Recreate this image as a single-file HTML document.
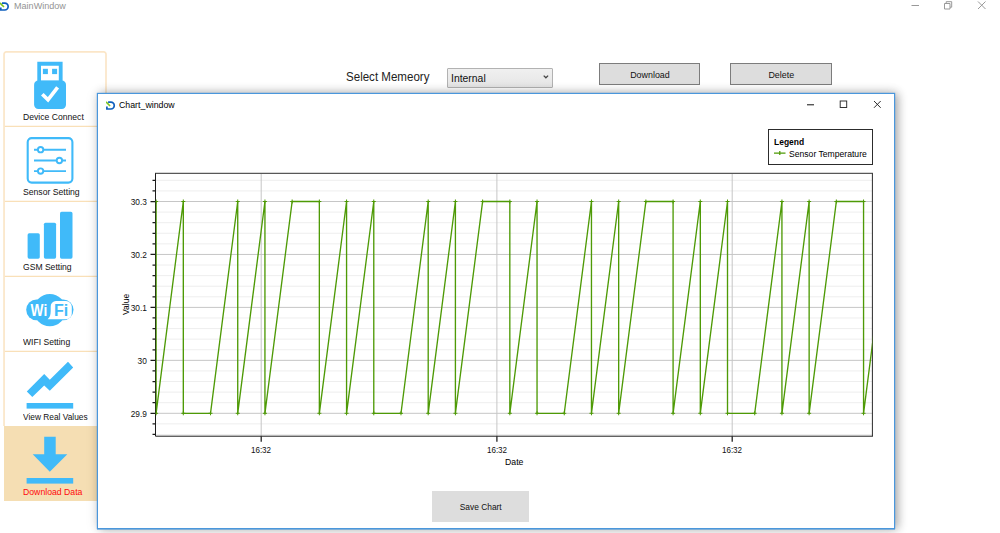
<!DOCTYPE html>
<html><head><meta charset="utf-8"><title>MainWindow</title>
<style>
*{box-sizing:border-box;margin:0;padding:0}
html,body{width:1000px;height:533px;overflow:hidden;background:#fff;font-family:"Liberation Sans",sans-serif;color:#000}
.abs{position:absolute}
.t{position:absolute;white-space:nowrap;line-height:1;transform-origin:0 0}
/* main title */
#mt{left:13.6px;top:1px;font-size:9.9px;color:#939393;transform:scaleX(.917)}
/* sidebar */
#sb{left:4px;top:51px;width:103px;height:451px;border:1px solid #fbe6c8;border-radius:3px 0 0 0;border-bottom:none}
.sep{position:absolute;left:4px;width:103px;height:1px;background:#fbe6c8}
#sel{left:3.6px;top:425.8px;width:94px;height:75.6px;background:#f5deb3}
.lb{position:absolute;left:22.7px;font-size:9.9px;white-space:nowrap;line-height:1;color:#111;transform-origin:0 0}
/* controls */
#lbl{left:345.8px;top:71px;font-size:12.5px;color:#222;transform:scaleX(.924)}
#combo{left:447px;top:68px;width:106px;height:20px;border:1px solid #b2b2b2;background:linear-gradient(#f0f0f0,#e5e5e5);border-radius:1px}
.btn{position:absolute;top:63px;height:22px;border:1px solid #7c7c7c;background:#dddddd;font-size:9.9px;text-align:center;line-height:21px;color:#111}
.btn span{display:inline-block;transform:scaleX(.9)}
#save span{display:inline-block;transform:scaleX(.85)}
/* chart window */
#cw{left:97px;top:93px;width:798px;height:436px;background:#fff;border:1px solid #4a97dc;box-shadow:0 .5px 0 #4a97dc, 0 0 1px #2f8be0, 3px 0px 9px rgba(0,0,0,.30), 0 0 13px rgba(0,0,0,.09)}
#ct{left:119px;top:100px;font-size:9.9px;color:#000;transform:scaleX(.89)}
#lg{left:768px;top:129px;width:105px;height:36px;border:1px solid #2c2c2c;background:#fff}
.yl{position:absolute;right:852.8px;font-size:9.7px;line-height:14px;height:14px;white-space:nowrap;color:#111;transform:scaleX(.858);transform-origin:100% 0}
.xl{position:absolute;top:444.2px;width:40px;text-align:center;font-size:9.7px;line-height:12px;color:#111;transform:scaleX(.83)}
#save{left:432px;top:491px;width:97px;height:31px;background:#dddddd;font-size:9.9px;text-align:center;line-height:32px;color:#111}
</style></head>
<body>
<!-- main window title -->
<svg class="abs" style="left:0;top:1.75px;overflow:hidden" width="12" height="12" viewBox="0.1 0 12 12"><path d="M2.1 1.2H4.85A3.4 3.4 0 0 1 4.85 8H0.9V5.5" fill="none" stroke="#0f5fbd" stroke-width="1.7"/><path d="M0.45 1.35L3.6 4.5" fill="none" stroke="#7cc520" stroke-width="1.7" stroke-linecap="round"/></svg>
<div class="t" id="mt">MainWindow</div>
<svg class="abs" style="left:905px;top:0" width="95" height="14" viewBox="0 0 95 14" fill="none" stroke="#999" stroke-width="1">
<path d="M6.5 5.5h7.5"/>
<path d="M39.5 3.5h5.5v5.5h-5.5zM41.2 3.5v-1.8h5.5v5.5h-1.7"/>
<path d="M73 1.5l7.5 7.5M80.5 1.5l-7.5 7.5"/>
</svg>

<!-- sidebar -->
<div class="abs" id="sel"></div>
<svg class="abs" style="left:0;top:48px" width="112" height="458" viewBox="0 48 112 458" fill="none">
<path d="M4.05 426V54.2a2.2 2.2 0 0 1 2.2-2.25H103.8a2.2 2.2 0 0 1 2.2 2.25V94" stroke="#fbe6c8" stroke-width="1.7"/>
<path d="M4.8 126.4H97M4.8 201.4H97M4.8 276.4H97M4.8 351.4H97" stroke="#f9e0b8" stroke-width="1.3"/>
</svg>
<svg class="abs" style="left:0;top:51px" width="110" height="452" viewBox="0 51 110 452">
<g fill="#40baf9">
<!-- usb -->
<path d="M37.3 61.8h25.3v19.5h-25.3z M41 65.8v15h17.8v-15z" fill-rule="evenodd"/>
<rect x="42.9" y="68.8" width="5" height="5.3"/><rect x="52.1" y="68.8" width="5" height="5.3"/>
<rect x="34.1" y="80.6" width="31.9" height="28.3" rx="4.2"/>
<path d="M42.3 94.2l5.7 5.6 9.6-12.4" fill="none" stroke="#fff" stroke-width="3.7"/>
<!-- sensor -->
<rect x="27.7" y="138.1" width="44.7" height="44.5" rx="4" fill="none" stroke="#40baf9" stroke-width="2.1"/>
<g fill="none" stroke="#40baf9" stroke-width="1.9">
<path d="M34 149.7h3.9M43.3 149.7H66M34 160.5h22.7M62.1 160.5H66M34 171.1h3.9M43.3 171.1H66"/>
<circle cx="40.6" cy="149.7" r="2.7"/><circle cx="59.4" cy="160.5" r="2.7"/><circle cx="40.6" cy="171.1" r="2.7"/>
</g>
<!-- gsm -->
<rect x="27.6" y="233.3" width="12.2" height="25.4" rx="1.6"/>
<rect x="43.9" y="222.7" width="12.2" height="36" rx="1.6"/>
<rect x="60" y="211.8" width="12.5" height="46.9" rx="1.6"/>
<!-- wifi -->
<rect x="26.2" y="299.4" width="47.3" height="20.8" rx="10.4"/>
<circle cx="49.8" cy="310.2" r="16.1"/>
<!-- realvalues -->
<path d="M26.8 391.4L32.3 397 44.2 385.5 49.8 390.7 73.2 367.5 68 361.8 49.8 379.7 44.2 374.1z"/>
<rect x="26.6" y="403" width="46.6" height="5.6"/>
<!-- download -->
<path d="M44.2 436.8h11.5v17.5h11.6L49.8 471.8 32.7 454.3h11.5z"/>
<rect x="26.6" y="478" width="46.6" height="5.6"/>
</g>
<!-- wifi text -->
<path d="M56 301h10a5.8 5.8 0 0 1 5.8 5.8v6.6a5.8 5.8 0 0 1-5.8 5.8H47.6c2.6-2 3-4.5 3.1-8.2v-4.2a5.4 5.4 0 0 1 5.3-5.8z" fill="#fff"/>
<g font-family="Liberation Sans" font-weight="bold" font-size="15.6">
<text x="30.6" y="315.5" fill="#fff" textLength="16.6" lengthAdjust="spacingAndGlyphs">Wi</text>
<text x="54" y="315.5" fill="#40baf9" textLength="14.2" lengthAdjust="spacingAndGlyphs">Fi</text>
</g>
</svg>
<div class="lb" id="l1" style="top:112.0px;transform:scaleX(0.8720)">Device Connect</div>
<div class="lb" id="l2" style="top:187.0px;transform:scaleX(0.8750)">Sensor Setting</div>
<div class="lb" id="l3" style="top:262.0px;transform:scaleX(0.8680)">GSM Setting</div>
<div class="lb" id="l4" style="top:337.0px;transform:scaleX(0.8680)">WIFI Setting</div>
<div class="lb" id="l5" style="top:412.0px;transform:scaleX(0.8450)">View Real Values</div>
<div class="lb" id="l6" style="top:487.0px;transform:scaleX(0.8800);color:#ff0a0a">Download Data</div>

<!-- controls -->
<div class="t" id="lbl">Select Memeory</div>
<div class="abs" id="combo"><div class="t" id="cbt" style="left:3px;top:5px;font-size:10px;color:#111;transform:scaleX(1.04)">Internal</div>
<svg class="abs" style="left:95.4px;top:6.4px" width="6" height="4" viewBox="0 0 6 4"><path d="M0.7 0.6L2.9 2.8L5.1 0.6" fill="none" stroke="#444" stroke-width="1.3"/></svg></div>
<div class="btn" id="b1" style="left:599px;width:101px"><span>Download</span></div>
<div class="btn" id="b2" style="left:730px;width:102px"><span>Delete</span></div>

<!-- chart window -->
<div class="abs" id="cw"></div>
<svg class="abs" style="left:106px;top:100.5px" width="12" height="12" viewBox="0 0 12 12"><path d="M2.1 1.2H4.85A3.4 3.4 0 0 1 4.85 8H0.9V5.5" fill="none" stroke="#0f5fbd" stroke-width="1.7"/><path d="M0.45 1.35L3.6 4.5" fill="none" stroke="#7cc520" stroke-width="1.7" stroke-linecap="round"/></svg>
<div class="t" id="ct">Chart_window</div>
<svg class="abs" style="left:800px;top:96px" width="90" height="16" viewBox="800 96 90 16" fill="none" stroke="#111" stroke-width="1">
<path d="M807 104.8h7"/>
<rect x="840.2" y="101" width="6.5" height="6.5" stroke="#2a2a2a" stroke-width=".95"/>
<path d="M874 101l6.7 6.8M880.7 101l-6.7 6.8" stroke="#222" stroke-width=".95"/>
</svg>
<div class="abs" id="lg">
<div class="t" id="lgt" style="left:5px;top:7px;font-size:9.7px;font-weight:bold;transform:scaleX(.875)">Legend</div>
<svg class="abs" style="left:4px;top:20px" width="14" height="6" viewBox="0 0 14 6"><path d="M1 3h11.5M6.8 1.1v3.8" stroke="#4e9a06" stroke-width="1.25" fill="none"/></svg>
<div class="t" id="lgs" style="left:19.6px;top:19px;font-size:9.7px;transform:scaleX(.888)">Sensor Temperature</div>
</div>

<svg class="abs" style="left:0;top:0" width="1000" height="533" viewBox="0 0 1000 533">
<defs><clipPath id="pc"><rect x="155.6" y="173" width="716.8" height="263.2"/></clipPath></defs>
<path d="M155.5 434.48H872.4M155.5 423.89H872.4M155.5 402.71H872.4M155.5 392.12H872.4M155.5 381.53H872.4M155.5 370.94H872.4M155.5 349.76H872.4M155.5 339.17H872.4M155.5 328.58H872.4M155.5 317.99H872.4M155.5 296.81H872.4M155.5 286.22H872.4M155.5 275.63H872.4M155.5 265.04H872.4M155.5 243.86H872.4M155.5 233.27H872.4M155.5 222.68H872.4M155.5 212.09H872.4M155.5 190.91H872.4M155.5 180.32H872.4" stroke="#eeeeee" stroke-width="1" fill="none"/>
<path d="M155.5 413.30H872.4M155.5 360.35H872.4M155.5 307.40H872.4M155.5 254.45H872.4M155.5 201.50H872.4" stroke="#c6c6c6" stroke-width="1" fill="none"/>
<path d="M261.2 173.3V436.2M496.9 173.3V436.2M732.2 173.3V436.2" stroke="#c6c6c6" stroke-width="1" fill="none"/>
<path d="M155.0 173.30H872.9" stroke="#585858" stroke-width="1.2" fill="none"/>
<path d="M872.4 173.30V436.20" stroke="#2a2a2a" stroke-width="1" fill="none"/>
<path d="M155.5 173.30V436.20H872.9" stroke="#1c1c1c" stroke-width="1" fill="none"/>
<path d="M155.5 434.48h-3M155.5 423.89h-3M155.5 402.71h-3M155.5 392.12h-3M155.5 381.53h-3M155.5 370.94h-3M155.5 349.76h-3M155.5 339.17h-3M155.5 328.58h-3M155.5 317.99h-3M155.5 296.81h-3M155.5 286.22h-3M155.5 275.63h-3M155.5 265.04h-3M155.5 243.86h-3M155.5 233.27h-3M155.5 222.68h-3M155.5 212.09h-3M155.5 190.91h-3M155.5 180.32h-3M155.5 413.30h-5M155.5 360.35h-5M155.5 307.40h-5M155.5 254.45h-5M155.5 201.50h-5M261.2 436.2v5.5M496.9 436.2v5.5M732.2 436.2v5.5" stroke="#1c1c1c" stroke-width="1.25" fill="none"/>
<g clip-path="url(#pc)"><polyline points="156.10,201.50 156.10,413.30 183.31,201.50 183.31,413.30 210.52,413.30 237.73,201.50 237.73,413.30 264.94,201.50 264.94,413.30 292.15,201.50 319.36,201.50 319.36,413.30 346.57,201.50 346.57,413.30 373.78,201.50 373.78,413.30 400.99,413.30 428.20,201.50 428.20,413.30 455.41,201.50 455.41,413.30 482.62,201.50 509.83,201.50 509.83,413.30 537.04,201.50 537.04,413.30 564.25,413.30 591.46,201.50 591.46,413.30 618.67,201.50 618.67,413.30 645.88,201.50 673.09,201.50 673.09,413.30 700.30,201.50 700.30,413.30 727.51,201.50 727.51,413.30 754.72,413.30 781.93,201.50 781.93,413.30 809.14,201.50 809.14,413.30 836.35,201.50 863.56,201.50 863.56,413.30 890.77,201.50" fill="none" stroke="#4e9a06" stroke-width="1.35" stroke-linejoin="miter"/>
<path d="M154.10 201.50h4M156.10 199.50v4M154.10 413.30h4M156.10 411.30v4M181.31 201.50h4M183.31 199.50v4M181.31 413.30h4M183.31 411.30v4M208.52 413.30h4M210.52 411.30v4M235.73 201.50h4M237.73 199.50v4M235.73 413.30h4M237.73 411.30v4M262.94 201.50h4M264.94 199.50v4M262.94 413.30h4M264.94 411.30v4M290.15 201.50h4M292.15 199.50v4M317.36 201.50h4M319.36 199.50v4M317.36 413.30h4M319.36 411.30v4M344.57 201.50h4M346.57 199.50v4M344.57 413.30h4M346.57 411.30v4M371.78 201.50h4M373.78 199.50v4M371.78 413.30h4M373.78 411.30v4M398.99 413.30h4M400.99 411.30v4M426.20 201.50h4M428.20 199.50v4M426.20 413.30h4M428.20 411.30v4M453.41 201.50h4M455.41 199.50v4M453.41 413.30h4M455.41 411.30v4M480.62 201.50h4M482.62 199.50v4M507.83 201.50h4M509.83 199.50v4M507.83 413.30h4M509.83 411.30v4M535.04 201.50h4M537.04 199.50v4M535.04 413.30h4M537.04 411.30v4M562.25 413.30h4M564.25 411.30v4M589.46 201.50h4M591.46 199.50v4M589.46 413.30h4M591.46 411.30v4M616.67 201.50h4M618.67 199.50v4M616.67 413.30h4M618.67 411.30v4M643.88 201.50h4M645.88 199.50v4M671.09 201.50h4M673.09 199.50v4M671.09 413.30h4M673.09 411.30v4M698.30 201.50h4M700.30 199.50v4M698.30 413.30h4M700.30 411.30v4M725.51 201.50h4M727.51 199.50v4M725.51 413.30h4M727.51 411.30v4M752.72 413.30h4M754.72 411.30v4M779.93 201.50h4M781.93 199.50v4M779.93 413.30h4M781.93 411.30v4M807.14 201.50h4M809.14 199.50v4M807.14 413.30h4M809.14 411.30v4M834.35 201.50h4M836.35 199.50v4M861.56 201.50h4M863.56 199.50v4M861.56 413.30h4M863.56 411.30v4M888.77 201.50h4M890.77 199.50v4" stroke="#4e9a06" stroke-width="1" fill="none"/></g>
</svg>
<div class="yl" style="top:195.1px">30.3</div><div class="yl" style="top:248.1px">30.2</div><div class="yl" style="top:301.0px">30.1</div><div class="yl" style="top:354.0px">30</div><div class="yl" style="top:406.9px">29.9</div>
<div class="xl" style="left:241.2px">16:32</div><div class="xl" style="left:476.9px">16:32</div><div class="xl" style="left:712.2px">16:32</div>
<div class="t" id="vl" style="left:121px;top:315.4px;font-size:9.7px;transform:rotate(-90deg) scaleX(.88)">Value</div>
<div class="t" id="dt" style="left:504.6px;top:457.1px;font-size:9.7px;transform:scaleX(.90)">Date</div>
<div class="abs" id="save"><span>Save Chart</span></div>
</body></html>
